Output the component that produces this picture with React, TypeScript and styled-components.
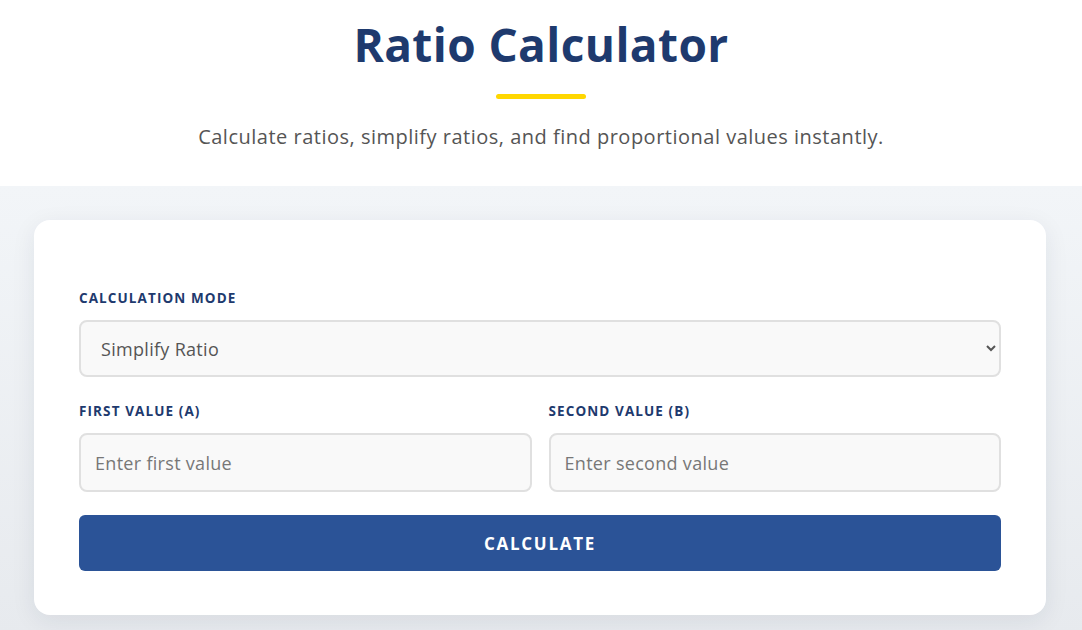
import React from "react";
import styled, { createGlobalStyle } from "styled-components";

const Global = createGlobalStyle`
  html, body { margin: 0; padding: 0; }
  body { font-family: "Open Sans", "Noto Sans", sans-serif; background: #f1f4f7; }
  * { box-sizing: border-box; }
`;

const Header = styled.header`
  background: #ffffff;
  padding: 16px 20px 35px;
  display: flex;
  flex-direction: column;
  align-items: center;
`;

const Title = styled.h1`
  margin: 0;
  font-size: 46px;
  font-weight: 700;
  color: #1e3a6e;
  line-height: 56px;
  letter-spacing: 0.4px;
`;

const Accent = styled.div`
  width: 90px;
  height: 5px;
  border-radius: 3px;
  background: #ffd700;
  margin: 22px 0 24px;
`;

const Subtitle = styled.p`
  margin: 0;
  font-size: 20px;
  color: #555;
  line-height: 28px;
  letter-spacing: 0.5px;
`;

const Main = styled.main`
  padding: 34px 36px 20px 34px;
  background: linear-gradient(#f2f5f8, #e7eaee);
`;

const Card = styled.section`
  background: #fff;
  border-radius: 16px;
  box-shadow: 0 6px 24px rgba(30, 40, 60, 0.08);
  padding: 68px 45px 44px;
  display: flex;
  flex-direction: column;
  gap: 24px;
`;

const Field = styled.div`
  display: flex;
  flex-direction: column;
  gap: 12px;
  flex: 1;
`;

const Label = styled.label`
  font-size: 13.5px;
  font-weight: 700;
  color: #1e3a6e;
  text-transform: uppercase;
  letter-spacing: 1.1px;
  line-height: 20px;
`;

const Select = styled.select`
  height: 57px;
  border: 2px solid #e0e0e0;
  border-radius: 8px;
  background: #f9f9f9;
  padding: 0 10px 0 16px;
  font-family: inherit;
  font-size: 18px;
  letter-spacing: 0.3px;
  color: #555;
`;

const Row = styled.div`
  display: flex;
  gap: 17px;
`;

const Input = styled.input`
  height: 59px;
  border: 2px solid #e0e0e0;
  border-radius: 8px;
  background: #f9f9f9;
  padding: 0 14px;
  font-family: inherit;
  font-size: 18px;
  letter-spacing: 0.3px;
  color: #333;
  &::placeholder { color: #777; }
`;

const Button = styled.button`
  height: 56px;
  border: none;
  border-radius: 6px;
  background: #2b5397;
  color: #fff;
  font-family: inherit;
  font-size: 17px;
  font-weight: 700;
  letter-spacing: 1.7px;
  text-transform: uppercase;
  margin-top: -1px;
`;

export default function App() {
  return (
    <>
      <Global />
      <Header>
        <Title>Ratio Calculator</Title>
        <Accent />
        <Subtitle>Calculate ratios, simplify ratios, and find proportional values instantly.</Subtitle>
      </Header>
      <Main>
        <Card>
          <Field>
            <Label>Calculation Mode</Label>
            <Select defaultValue="simplify">
              <option value="simplify">Simplify Ratio</option>
              <option value="proportion">Find Proportional Value</option>
            </Select>
          </Field>
          <Row>
            <Field>
              <Label>First Value (A)</Label>
              <Input placeholder="Enter first value" />
            </Field>
            <Field>
              <Label>Second Value (B)</Label>
              <Input placeholder="Enter second value" />
            </Field>
          </Row>
          <Button>Calculate</Button>
        </Card>
      </Main>
    </>
  );
}
